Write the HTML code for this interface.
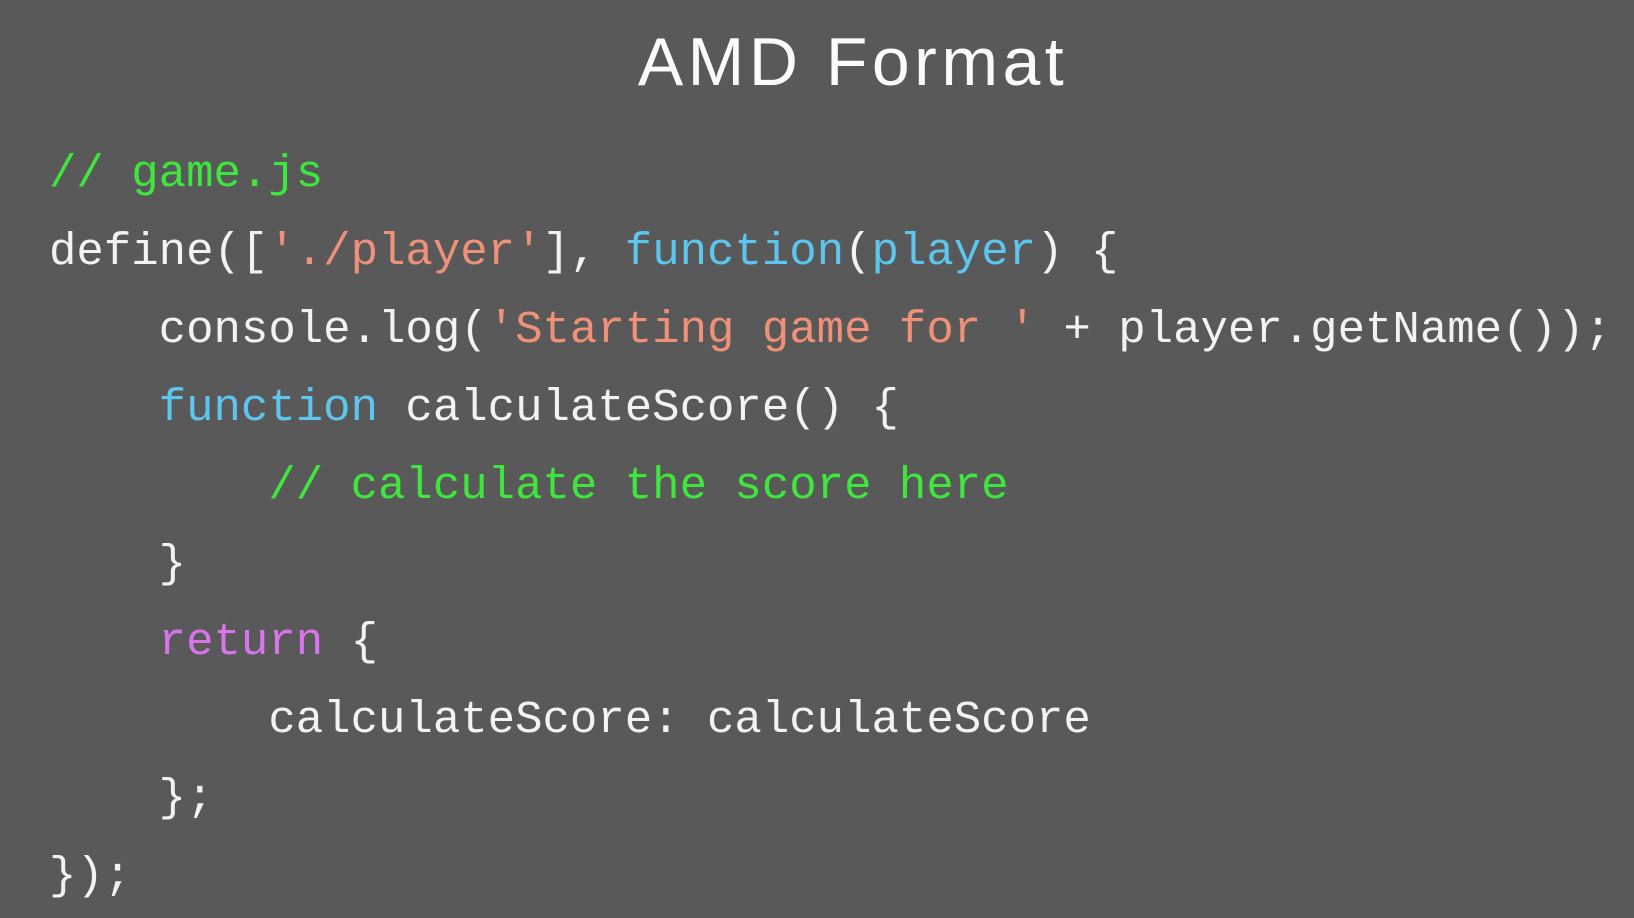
<!DOCTYPE html>
<html><head><meta charset="utf-8"><style>
html,body{margin:0;padding:0;}
body{width:1634px;height:918px;background:#595959;position:relative;overflow:hidden;}
h1{position:absolute;left:0;width:1706px;top:22px;margin:0;text-align:center;font:300 68px/80px "Liberation Sans",sans-serif;letter-spacing:4.5px;color:#fafafa;}
pre{position:absolute;left:49px;top:135px;margin:0;font:45.7px/78px "Liberation Mono",monospace;color:#f2f2f2;}
.c{color:#3ee63e}.s{color:#ee9178}.k{color:#5cc6ee}.r{color:#d875ea}
</style></head><body>
<h1>AMD Format</h1>
<pre><span class="c">// game.js</span>
define([<span class="s">'./player'</span>], <span class="k">function</span>(<span class="k">player</span>) {
    console.log(<span class="s">'Starting game for '</span> + player.getName());
    <span class="k">function</span> calculateScore() {
        <span class="c">// calculate the score here</span>
    }
    <span class="r">return</span> {
        calculateScore: calculateScore
    };
});</pre>
</body></html>
